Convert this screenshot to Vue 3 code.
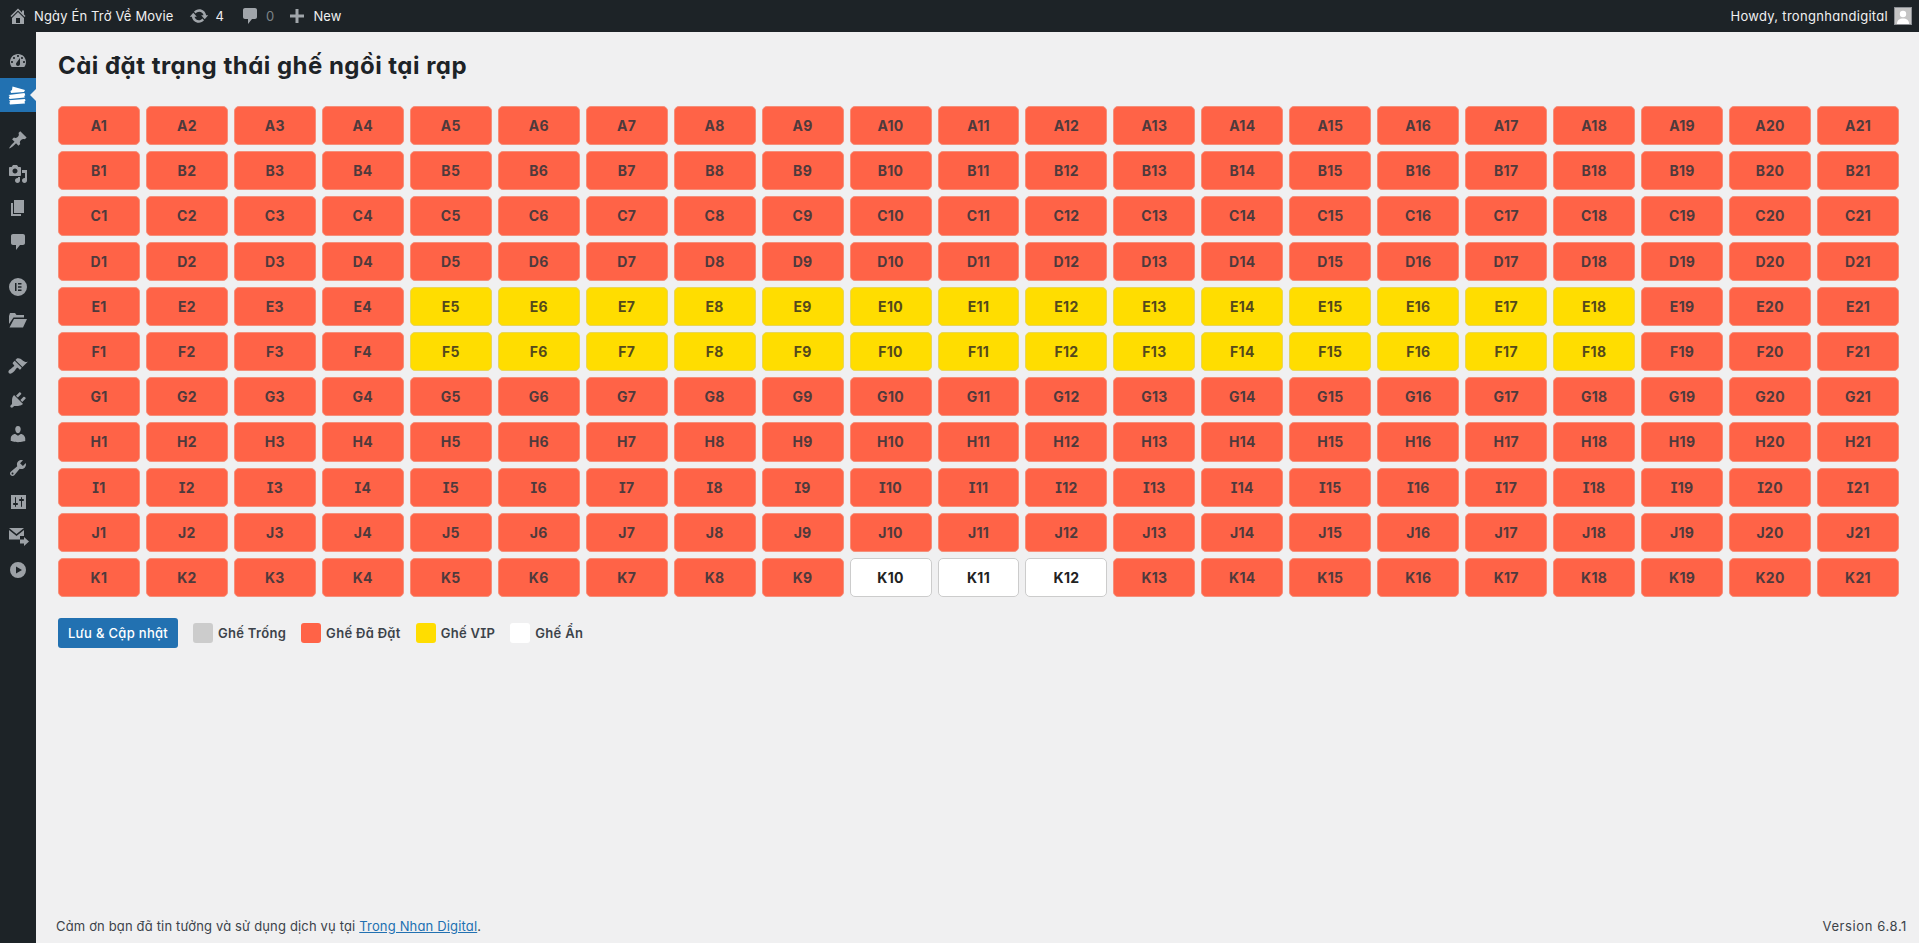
<template>
  <div class="admin-page">
    <header class="admin-bar">
      <div class="bar-left">
        <a class="bar-item">
          <svg class="bar-icon" viewBox="0 0 20 20"><path :d="icons.home" /></svg>
          <span class="bar-text">Ngày Én Trở Về Movie</span>
        </a>
        <a class="bar-item">
          <svg class="bar-icon" viewBox="0 0 20 20"><path :d="icons.update" /></svg>
          <span class="bar-text">4</span>
        </a>
        <a class="bar-item tight">
          <svg class="bar-icon" viewBox="0 0 20 20"><path :d="icons.comment" /></svg>
          <span class="bar-text muted">0</span>
        </a>
        <a class="bar-item">
          <svg class="bar-icon" viewBox="0 0 20 20"><path :d="icons.plus" /></svg>
          <span class="bar-text">New</span>
        </a>
      </div>
      <div class="bar-right">
        <span class="bar-text">Howdy, trongnhandigital</span>
        <span class="avatar">
          <svg viewBox="0 0 16 16"><circle cx="8" cy="6" r="3.2" fill="#fff" /><path d="M2 16c0-4 2.500-5.500 6-5.500s6 1.500 6 5.500z" fill="#fff" /></svg>
        </span>
      </div>
    </header>

    <div class="admin-body">
      <nav class="side-menu">
        <div
          v-for="item in menu"
          :key="item.name"
          class="menu-item"
          :class="{ active: item.active, 'after-sep': item.sep }"
        >
          <svg class="menu-icon" viewBox="0 0 20 20" fill-rule="evenodd"><path :d="icons[item.name]" /></svg>
        </div>
      </nav>

      <main class="content">
        <h1 class="page-title">Cài đặt trạng thái ghế ngồi tại rạp</h1>

        <div class="seat-grid">
          <button
            v-for="seat in seats"
            :key="seat.id"
            type="button"
            class="seat"
            :class="seat.status"
          >
            {{ seat.id }}
          </button>
        </div>

        <div class="actions">
          <button type="button" class="btn-save">Lưu &amp; Cập nhật</button>
          <div v-for="entry in legend" :key="entry.label" class="legend-item">
            <span class="swatch" :class="entry.status"></span>
            <span>{{ entry.label }}</span>
          </div>
        </div>

        <footer class="page-footer">
          <span>Cảm ơn bạn đã tin tưởng và sử dụng dịch vụ tại <a class="footer-link">Trong Nhan Digital</a>.</span>
          <span class="version">Version 6.8.1</span>
        </footer>
      </main>
    </div>
  </div>
</template>

<script setup>
const rows = ['A', 'B', 'C', 'D', 'E', 'F', 'G', 'H', 'I', 'J', 'K']

const seatStatus = (row, col) => {
  if (row === 'K' && col >= 10 && col <= 12) return 'hidden'
  if ((row === 'E' || row === 'F') && col >= 5 && col <= 18) return 'vip'
  return 'booked'
}

const seats = rows.flatMap((row) =>
  Array.from({ length: 21 }, (_, i) => ({
    id: row + (i + 1),
    status: seatStatus(row, i + 1)
  }))
)

const legend = [
  { label: 'Ghế Trống', status: 'empty' },
  { label: 'Ghế Đã Đặt', status: 'booked' },
  { label: 'Ghế VIP', status: 'vip' },
  { label: 'Ghế Ẩn', status: 'hidden' }
]

const menu = [
  { name: 'dashboard' },
  { name: 'tickets', active: true },
  { name: 'pin', sep: true },
  { name: 'media' },
  { name: 'pages' },
  { name: 'comment' },
  { name: 'elementor', sep: true },
  { name: 'folder' },
  { name: 'brush', sep: true },
  { name: 'plugin' },
  { name: 'user' },
  { name: 'wrench' },
  { name: 'settings' },
  { name: 'mail' },
  { name: 'play' }
]

const icons = {
  home: 'M16 8.500l1.530 1.530-1.060 1.060L10 4.620l-6.470 6.470-1.060-1.060L10 2.500l4 4v-2h2v4zm-6-2.460l6 5.990V18H4v-5.970zM12 17v-5H8v5h4z',
  update: 'M10.200 3.280c3.530 0 6.430 2.610 6.920 6h2.080l-3.500 4-3.500-4h2.320c-.45-1.970-2.210-3.450-4.320-3.450-1.450 0-2.730.71-3.540 1.780L4.950 5.660C6.230 4.200 8.110 3.280 10.200 3.280zm-.4 13.440c-3.520 0-6.430-2.610-6.920-6H.8l3.500-4c1.170 1.330 2.330 2.670 3.500 4H5.480c.45 1.970 2.210 3.450 4.320 3.450 1.450 0 2.730-.71 3.540-1.780l1.710 1.950c-1.280 1.460-3.150 2.380-5.250 2.380z',
  comment: 'M5 2h10c1.100 0 2 .9 2 2v7c0 1.100-.9 2-2 2h-3l-4 5v-5H5c-1.100 0-2-.9-2-2V4c0-1.100.9-2 2-2z',
  plus: 'M17 8.500v3h-5.500V17h-3v-5.500H3v-3h5.500V3h3v5.500z',
  dashboard: 'M3.760 16h12.480c1.100-1.370 1.760-3.110 1.760-5 0-4.420-3.580-8-8-8s-8 3.580-8 8c0 1.890.66 3.630 1.760 5zM10 4c.55 0 1 .45 1 1s-.45 1-1 1-1-.45-1-1 .45-1 1-1zM6 6c.55 0 1 .45 1 1s-.45 1-1 1-1-.45-1-1 .45-1 1-1zm8 0c.55 0 1 .45 1 1s-.45 1-1 1-1-.45-1-1 .45-1 1-1zm-5.370 5.550L12 7v6c0 1.100-.9 2-2 2s-2-.9-2-2c0-.57.24-1.080.63-1.450zM4 10c.55 0 1 .45 1 1s-.45 1-1 1-1-.45-1-1 .45-1 1-1zm12 0c.55 0 1 .45 1 1s-.45 1-1 1-1-.45-1-1 .45-1 1-1z',
  tickets: 'M4.500 1.500 17 5 16 7 3 8 2.500 6 4 5zM.5 10 16.500 8 17.300 10.200 16.200 11 16.800 12.500 1.500 14 .8 12 2 11.300zM1 15.200 17 14 17.500 15.700 16.500 16.500 17 18.500 2 19.500 1.300 17.700 2.300 17z',
  pin: 'M10.440 3.020l1.820-1.820 6.360 6.350-1.830 1.820c-1.050-.68-2.480-.57-3.410.36l-.75.75c-.92.93-1.040 2.350-.35 3.410l-1.830 1.820-2.410-2.410-2.800 2.790c-.42.42-3.380 2.710-3.800 2.290s1.860-3.390 2.280-3.810l2.790-2.790L4.100 9.360l1.830-1.820c1.050.69 2.480.57 3.400-.36l.75-.75c.93-.92 1.050-2.350.36-3.410z',
  media: 'M13 11V4c0-.55-.45-1-1-1h-1.670L9 1H5L3.670 3H2c-.55 0-1 .45-1 1v7c0 .55.45 1 1 1h10c.55 0 1-.45 1-1zM7 4.500c1.380 0 2.500 1.120 2.500 2.500S8.380 9.500 7 9.500 4.500 8.380 4.500 7 5.620 4.500 7 4.500zM14 6h5v10.500c0 1.380-1.120 2.500-2.500 2.500S14 17.880 14 16.500s1.120-2.500 2.500-2.500c.17 0 .34.02.5.05V9h-3V6zm-4 8.050V13h2v3.500c0 1.380-1.120 2.500-2.500 2.500S7 17.880 7 16.500 8.120 14 9.500 14c.17 0 .34.02.5.05z',
  pages: 'M6 15V2h10v13H6zm-1 1h8v2H3V5h2v11z',
  elementor: 'M10 1a9 9 0 1 0 0 18 9 9 0 0 0 0-18zM7 6h1.500v8H7zM10 6h3.500v1.500H10zM10 9.250h3.500v1.500H10zM10 12.500h3.500V14H10z',
  folder: 'M1 5 2 2h5l1.500 2H16v2.500H5.500L1 13zM1.500 16.500 6 8h13l-4 8.500z',
  brush: 'M14.480 11.060L7.410 3.990l1.500-1.500c.5-.56 2.300-.47 3.510.32 1.210.8 1.430 1.280 2.910 2.100 1.180.64 2.450 1.260 4.450.85zm-.71.71L6.700 4.700 4.930 6.470c-.39.39-.39 1.020 0 1.410l1.060 1.060c.39.39.39 1.030 0 1.420-.6.6-1.430 1.110-2.210 1.690-.35.26-.7.53-1.010.84C1.430 13.230.4 14.980.4 15.720c0 1.060.92 1.980 1.980 1.980.74 0 2.490-1.030 3.840-2.370.31-.31.58-.66.84-1.010.58-.78 1.090-1.610 1.690-2.210.39-.39 1.030-.39 1.420 0l1.060 1.060c.39.39 1.020.39 1.410 0z',
  plugin: 'M13.110 4.360L9.870 7.600 8 5.730l3.240-3.240c.35-.34 1.050-.2 1.560.32.52.51.66 1.210.31 1.550zm-8 1.770l.91-1.120 9.010 9.010-1.190.84c-.71.71-2.630 1.160-3.820 1.160H6.140L4.900 17.260c-.59.59-1.540.59-2.120 0-.59-.58-.59-1.530 0-2.120l1.240-1.240v-3.880c0-1.130.4-3.190 1.090-3.890zm7.260 3.970l3.240-3.240c.34-.35 1.040-.21 1.550.31.52.51.66 1.210.31 1.550l-3.240 3.250z',
  user: 'M10 9.250c-2.270 0-2.730-3.440-2.730-3.440C7 4.020 7.820 2 9.970 2c2.160 0 2.980 2.020 2.710 3.810 0 0-.41 3.440-2.680 3.440zm0 2.570L12.720 10c2.390 0 4.520 2.330 4.520 4.530v2.490s-3.650 1.130-7.240 1.130c-3.650 0-7.240-1.130-7.240-1.130v-2.490c0-2.250 1.940-4.480 4.470-4.480z',
  wrench: 'M16.680 9.770c-1.340 1.340-3.300 1.670-4.950.99l-5.410 6.520c-.99.99-2.590.99-3.580 0s-.99-2.590 0-3.570l6.520-5.420c-.68-1.650-.35-3.610.99-4.950 1.280-1.280 3.120-1.620 4.720-1.060l-2.890 2.890 2.820 2.820 2.860-2.870c.53 1.580.18 3.390-1.080 4.670zM3.810 16.210c.4.39 1.040.39 1.430 0 .4-.4.4-1.040 0-1.430-.39-.4-1.030-.4-1.430 0-.39.39-.39 1.030 0 1.430z',
  settings: 'M18 17V3H3v14zM8 11h1c.55 0 1 .45 1 1s-.45 1-1 1H8v1.500c0 .28-.22.5-.5.5s-.5-.22-.5-.5V13H6c-.55 0-1-.45-1-1s.45-1 1-1h1V5.500c0-.28.22-.5.5-.5s.5.22.5.5zm5-2h-1c-.55 0-1-.45-1-1s.45-1 1-1h1V5.500c0-.28.22-.5.5-.5s.5.22.5.5V7h1c.55 0 1 .45 1 1s-.45 1-1 1h-1v5.500c0 .28-.22.5-.5.5s-.5-.22-.5-.5z',
  mail: 'M1 2h15L8.500 8zM1 4l7.500 6L16 4v6h-4v3.500H1zM16 11l5 4.500-5 4.500v-2.500h-4v-4h4z',
  play: 'M10 2a8 8 0 1 0 0 16 8 8 0 0 0 0-16zM8 6.500l6 3.500-6 3.500z'
}
</script>

<style>
html, body { margin: 0; background: #f0f0f1; }
</style>

<style scoped>
.admin-page {
  display: flex;
  flex-direction: column;
  height: 943px;
  overflow: hidden;
  font-family: Inter, "Noto Sans", sans-serif;
  font-feature-settings: "cv11", "cv08";
  color: #3c434a;
}

.admin-bar {
  display: flex;
  justify-content: space-between;
  align-items: center;
  height: 32px;
  flex: none;
  background: #1d2327;
  color: #f0f0f1;
  font-size: 13px;
  letter-spacing: .15px;
}
.bar-left { display: flex; align-items: center; }
.bar-item { display: flex; align-items: center; gap: 6px; padding: 0 8px; }
.bar-item.tight { margin-right: -3px; gap: 6px; }
.bar-icon { width: 20px; height: 20px; fill: #a0a5aa; }
.bar-text { white-space: nowrap; }
.muted { color: #7d8387; }
.bar-right { display: flex; align-items: center; gap: 6px; padding-right: 7px; letter-spacing: .3px; }
.avatar { display: flex; width: 18px; height: 18px; background: #c4c4c4; border: 1px solid #8c8f94; box-sizing: border-box; }
.avatar svg { width: 100%; height: 100%; }

.admin-body { display: flex; flex: 1; min-height: 0; }

.side-menu { width: 36px; flex: none; background: #1d2327; padding-top: 12px; box-sizing: border-box; }
.menu-item { position: relative; display: flex; align-items: center; justify-content: center; height: 34px; }
.menu-item.after-sep { margin-top: 11px; }
.menu-item.active { background: #2271b1; }
.menu-item.active::after {
  content: "";
  position: absolute;
  right: 0;
  top: 11px;
  border: 6px solid transparent;
  border-right-color: #f0f0f1;
  border-left: 0;
}
.menu-icon { width: 20px; height: 20px; fill: #9ca1a6; overflow: visible; }
.menu-item.active .menu-icon { fill: #fff; }

.content {
  flex: 1;
  min-width: 0;
  display: flex;
  flex-direction: column;
  padding: 18px 20px 0 22px;
}
.page-title {
  margin: 0 0 24px;
  font-size: 24px;
  line-height: 32px;
  font-weight: 700;
  letter-spacing: .48px;
  color: #1d2327;
}

.seat-grid {
  display: grid;
  grid-template-columns: repeat(21, 1fr);
  grid-auto-rows: 39.200px;
  gap: 6px;
}
.seat {
  padding: 0;
  border: 1px solid #ddd;
  border-radius: 5px;
  font-family: inherit;
  font-feature-settings: inherit;
  font-size: 14px;
  font-weight: 700;
  letter-spacing: .3px;
  color: #333;
  cursor: pointer;
}
.seat.booked { background: #ff6347; border-color: #f58f7a; color: #4f3a3c; }
.seat.vip { background: #ffdd00; border-color: #e8d65a; color: #54491c; }
.seat.hidden { background: #fff; border-color: #ccc; color: #222; }

.actions { display: flex; align-items: center; margin-top: 21px; font-size: 13px; font-weight: 600; letter-spacing: .3px; }
.btn-save {
  width: 120px;
  height: 30px;
  padding: 0;
  margin-right: 15px;
  border: none;
  border-radius: 3px;
  background: #2271b1;
  color: #fff;
  font-family: inherit;
  font-feature-settings: inherit;
  font-size: 13px;
  font-weight: 500;
  letter-spacing: .3px;
}
.legend-item { display: flex; align-items: center; gap: 5px; margin-right: 15px; }
.swatch { width: 20px; height: 20px; border-radius: 3px; }
.swatch.empty { background: #ccc; }
.swatch.booked { background: #ff6347; }
.swatch.vip { background: #ffdd00; }
.swatch.hidden { background: #fff; }

.page-footer {
  display: flex;
  justify-content: space-between;
  margin-top: auto;
  padding-bottom: 8px;
  margin-left: -2px;
  margin-right: -8px;
  font-size: 13px;
  line-height: 17px;
  letter-spacing: .16px;
}
.version { letter-spacing: .6px; }
.footer-link { color: #2271b1; text-decoration: underline; }
</style>
